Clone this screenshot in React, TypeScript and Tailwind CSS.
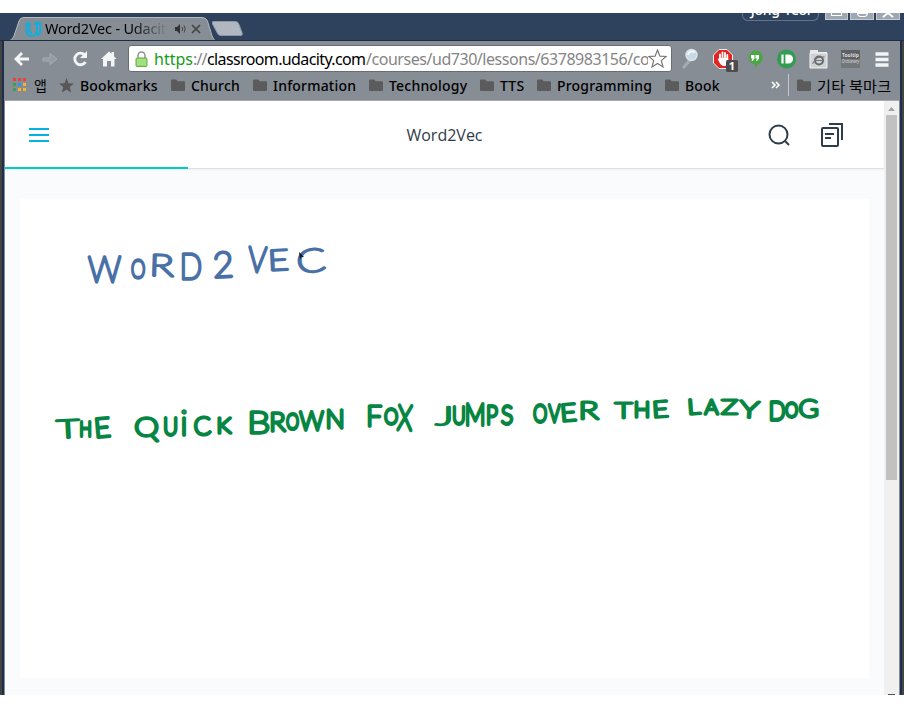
import type { ReactNode } from "react";

const UI = "font-['Noto_Sans','Noto_Sans_CJK_KR',sans-serif]";

type Letter = [string, number, number, number, number, number?];

const heading: Letter[] = [
  ["W", 87, 253, 122, 283], ["O", 130, 256, 146, 279], ["R", 152, 252, 175, 277, 2], ["D", 181, 251, 202, 280],
  ["2", 213, 249, 233, 278, -3], ["V", 247, 244, 268, 273, 3], ["E", 270, 247, 289, 271, -3], ["C", 297, 246, 326, 273, -5],
];

const sentence: Letter[] = [
  ["T", 55, 417, 81, 439, -3], ["H", 79, 418, 92, 437], ["E", 95, 415, 111, 438, -5],
  ["Q", 134, 414, 160, 441], ["U", 163, 415, 178, 436], ["i", 181, 408, 187, 436], ["C", 193, 414, 212, 436, -3], ["K", 217, 414, 233, 434],
  ["B", 249, 408, 270, 434], ["R", 270, 409, 287, 432], ["O", 285, 410, 300, 430], ["W", 298, 408, 325, 431], ["N", 326, 406, 344, 429],
  ["F", 367, 403, 383, 427], ["O", 383, 405, 399, 425], ["X", 396, 402, 414, 431, 3],
  ["J", 434, 403, 451, 426], ["U", 452, 404, 466, 425], ["M", 465, 401, 485, 426], ["P", 486, 403, 499, 425], ["S", 500, 402, 514, 425],
  ["O", 532, 402, 548, 423], ["V", 547, 402, 562, 423], ["E", 561, 401, 577, 422, -5], ["R", 580, 399, 600, 420],
  ["T", 613, 399, 634, 419], ["H", 634, 398, 650, 418], ["E", 653, 398, 669, 418, -4],
  ["L", 688, 396, 702, 415, -4], ["A", 703, 396, 720, 415], ["Z", 720, 397, 739, 415], ["Y", 738, 398, 761, 419, 4],
  ["D", 769, 399, 786, 421], ["O", 784, 400, 799, 418], ["G", 798, 397, 819, 418],
];

const pen = document.createElement("canvas").getContext("2d")!;

// Fits each written letter to its own box so the line keeps an uneven, inked rhythm.
function Ink({ letters, color, width }: { letters: Letter[]; color: string; width: number }) {
  pen.font = "100 100px Lato";
  return (
    <g fill={color} stroke={color} strokeLinejoin="round" strokeLinecap="round">
      {letters.map(([ch, x0, y0, x1, y1, turn = 0], i) => {
        const m = pen.measureText(ch);
        const inkWidth = m.actualBoundingBoxRight + m.actualBoundingBoxLeft;
        const sy = (y1 - y0 - width) / (m.actualBoundingBoxAscent + m.actualBoundingBoxDescent);
        const sx = ch === "i" ? sy : (x1 - x0 - width) / inkWidth;
        const tx = (x0 + x1) / 2 - (inkWidth * sx) / 2 + m.actualBoundingBoxLeft * sx;
        const ty = y0 + width / 2 + m.actualBoundingBoxAscent * sy;
        return (
          <text
            key={i}
            fontFamily="Lato, sans-serif"
            fontWeight={100}
            fontSize={100}
            strokeWidth={width - 0.8}
            vectorEffect="non-scaling-stroke"
            transform={`rotate(${turn} ${(x0 + x1) / 2} ${(y0 + y1) / 2}) translate(${tx} ${ty}) scale(${sx} ${sy})`}
          >
            {ch}
          </text>
        );
      })}
    </g>
  );
}

function Folder() {
  return (
    <svg width="14" height="12" viewBox="0 0 14 12" className="shrink-0">
      <path d="M0 1.500Q0 .5 1 .5h4.200l1.500 1.700H13q1 0 1 1V11q0 1-1 1H1q-1 0-1-1z" fill="#5b5b5b" />
    </svg>
  );
}

function Bookmark({ width, children }: { width: string; children: ReactNode }) {
  return (
    <div className={`flex shrink-0 items-center gap-1.5 ${width}`}>
      <Folder />
      <span>{children}</span>
    </div>
  );
}

function TitleBar() {
  return (
    <div className="flex h-7 shrink-0 overflow-hidden border-b border-[#1f2c42] bg-[#2f425d] pl-2">
      <div className="relative mt-1 h-6 w-[204px] shrink-0">
        <svg width="208" height="25" className="absolute left-0 top-0">
          <path d="M0 24Q4 24 6 19L11 4Q12 .5 16 .5H194Q198 .5 199.500 4L204 19Q206 24 208 24V25H0Z" fill="#868d95" />
          <path d="M0 24Q4 24 6 19L11 4Q12 .5 16 .5H194Q198 .5 199.500 4L204 19Q206 24 208 24" fill="none" stroke="#b3b9bf" />
        </svg>
        <div className="relative flex h-6 items-center pl-[17px]">
          <svg width="17" height="17" viewBox="0 0 17 17" fill="none" stroke="#0cb0df" strokeWidth="2">
            <path d="M4.500 1.500 1.500 3v6.500q0 5.500 5 5.500 4.500 0 5-4.500M4.500 1.500V9q0 3 2.500 3" />
            <path d="M9 3.500 12 1.500l3.500 1.500V9q0 4-3.500 5.500M12 1.500V10q-.3 2.500-2 3.500" />
          </svg>
          <span className="ml-[3px] w-[123px] overflow-hidden whitespace-nowrap bg-linear-to-r from-black from-70% to-transparent bg-clip-text text-[14.5px] tracking-[-0.2px] text-transparent">Word2Vec - Udacity</span>
          <svg width="28" height="12" viewBox="0 0 28 12" className="ml-[7px] shrink-0">
            <path d="M0 4h2l3-3v10L2 8H0z" fill="#333" />
            <path d="M7 4q1.500 2 0 4M9 2.500q2.500 3.500 0 7" stroke="#444" fill="none" />
            <path d="m17 2 8 8m0-8-8 8" stroke="#444" strokeWidth="1.700" />
          </svg>
        </div>
      </div>
      <svg width="32" height="16" className="mt-2 shrink-0">
        <path d="M1.500.5h22q2.500 0 3.500 3l3 8q1 3-1 3H9q-3 0-4-3L0 2Q-.5.5 1.500.5Z" fill="#b0b7c0" stroke="#8c96a4" />
      </svg>
      <div className="ml-auto flex">
        <div className="mr-[6px] h-2 w-[77px] overflow-hidden rounded-b-md border border-t-0 border-[#65748b] text-center">
          <div className="-mt-[13px] text-[14px] font-medium leading-5 tracking-[-0.3px] text-white">Jong-Yeol</div>
        </div>
        <div className="mr-[2px] h-[7px] w-[23px] border border-t-0 border-[#c4cbd2] bg-[#9da7b1]"><div className="mx-auto h-[3px] w-[11px] border border-t-0 border-white" /></div>
        <div className="mr-[2px] h-[7px] w-[24px] border border-t-0 border-[#c4cbd2] bg-[#9da7b1]"><div className="mx-auto h-[4px] w-[11px] rounded-b-sm border border-white" /></div>
        <div className="mr-[4px] h-[7px] w-[24px] border border-t-0 border-[#c4cbd2] bg-[#9da7b1]">
          <svg width="22" height="6"><path d="m6 4 5-4 5 4" stroke="white" strokeWidth="2" fill="none" /></svg>
        </div>
      </div>
    </div>
  );
}

function Navigation() {
  return (
    <div className="flex h-[35px] shrink-0 items-center pl-[9px]">
      <svg width="106" height="20" viewBox="0 0 106 20" className="mr-[8px] shrink-0" fill="none">
        <path d="M15 10H2M8 4l-6 6 6 6" stroke="#f3f5f6" strokeWidth="2.800" />
        <path d="M29 9h7V4.500l7 5.500-7 5.500V12h-7z" fill="#959ca3" stroke="#a6adb3" />
        <path d="M71 6.200A5.800 5.800 0 1 0 71.500 13" stroke="#f3f5f6" strokeWidth="2.800" />
        <path d="M73 2v7h-7z" fill="#f3f5f6" />
        <path d="m87 10 8-7.500 2.500 2.300V3h2.500v4.300l2.500 2.700h-2v7.500h-3.500V12h-4v5.500h-4V10z" fill="#f3f5f6" />
      </svg>
      <div className="flex h-[27px] w-[544px] shrink-0 items-center overflow-hidden rounded-[3px] border border-[#666d74] bg-white pl-1.5">
        <svg width="13" height="16" viewBox="0 0 13 16">
          <path d="M3 8V4.500a3.500 3.500 0 0 1 7 0V8" fill="none" stroke="#8d9589" strokeWidth="1.500" />
          <rect x="1" y="7" width="11" height="8.500" rx="1" fill="#96db6d" stroke="#68a94c" />
          <path d="M2 9h9M2 11h9M2 13h9" stroke="#bceba1" strokeWidth=".7" />
        </svg>
        <div className="ml-[6px] flex w-[494px] shrink-0 overflow-hidden whitespace-nowrap text-[16px] tracking-[-0.5px] text-[#858585]">
          <span className="w-[39px] shrink-0 tracking-[0px] text-[#159c16]">https</span>
          <span className="w-[14px] shrink-0 tracking-[-0.9px]">://</span>
          <span className="w-[159px] shrink-0 tracking-[-0.62px] text-black">classroom.udacity.com</span>
          <span className="tracking-[-0.46px]">/courses/ud730/lessons/6378983156/co</span>
        </div>
        <svg width="19" height="20" viewBox="0 0 19 20" className="shrink-0">
          <path d="m9.500 1 2.400 6.100 6.300.4-4.900 4.100 1.700 6.300-5.500-3.500L4 17.900l1.700-6.300L.8 7.500l6.300-.4z" fill="white" stroke="#777" strokeWidth="1.200" />
        </svg>
      </div>
      <svg width="218" height="28" viewBox="0 0 218 28" className="ml-[9px] shrink-0">
        <path d="m3 22 6-7" stroke="#a9acad" strokeWidth="3" strokeLinecap="round" />
        <circle cx="10.500" cy="10" r="5.500" fill="#c5dbe9" stroke="#dce2e5" strokeWidth="1.500" />
        <path d="M7 10q1-5 7-3" fill="none" stroke="#eff9ff" strokeWidth="2" />
        <path d="M38 4.500h8l5.500 5.500v8l-5.500 5.500h-8L32.500 18v-8z" fill="#df2424" stroke="#eee" />
        <path d="M39 14V9.500M41.500 14V7.500M44 14V8M46.300 15v-5" stroke="white" strokeWidth="1.800" strokeLinecap="round" />
        <path d="M38.100 13h9.100v4q-.5 4-4 4-3 0-4.500-3l-2-4q1-1.500 2.500 1z" fill="white" />
        <rect x="45" y="15" width="12" height="12" rx="1.500" fill="#4c4c4c" />
        <text x="51" y="25" textAnchor="middle" fontSize="11" fontWeight="700" fill="white">1</text>
        <path d="M74 19.500a7 7 0 1 1 3.500-.5q-1.500 2.500-3.500 3.500z" fill="#49a642" />
        <path d="M70 10h3.500v3.500l-2 2.500h-1l1-2.500H70zm4.500 0H78v3.500l-2 2.500h-1l1-2.500h-1.500z" fill="white" />
        <circle cx="105.500" cy="14" r="9.500" fill="#329d52" />
        <path d="M101.500 9.500v9M105.500 10.500v7h2a3.500 3.500 0 0 0 0-7z" stroke="white" strokeWidth="2.200" fill="white" />
        <path d="M129 7V5h8v2h9v16h-17z" fill="#e6e7e7" />
        <path d="M129 8h17v15h-17z" fill="#cfd1d2" stroke="#f2f2f2" />
        <circle cx="138" cy="15.500" r="4" fill="none" stroke="#66696b" strokeWidth="2" />
        <path d="M134 15.500h8M131.500 19q3-8 12-7" fill="none" stroke="#707577" />
        <path d="M160 5h19v18h-19z" fill="#747779" /><path d="M160 5h19v9h-19z" fill="#5e6163" />
        <text x="161" y="12" fontSize="6" fontWeight="700" fill="#ddd" textLength="17" lengthAdjust="spacingAndGlyphs">Tooltip</text>
        <text x="161" y="18" fontSize="4.500" fill="#ddd" textLength="17" lengthAdjust="spacingAndGlyphs">Dictionary</text>
        <path d="M194.500 9h13m-13 5.500h13M194.500 20h13" stroke="#f3f4f5" strokeWidth="3.600" />
      </svg>
    </div>
  );
}

function BookmarkBar() {
  return (
    <div className="flex h-[25px] shrink-0 items-center whitespace-nowrap border-b border-[#aaa] pb-[6px] pl-2 text-[14px] font-medium tracking-[0.2px] text-black">
      <svg width="13" height="14" viewBox="0 0 13 14" className="mr-[8px] shrink-0">
        <path d="M0 0h3v3H0zM5 0h3v3H5zM10 0h3v3h-3z" fill="#ef4037" /><path d="M0 5h3v3H0zM0 10h3v3H0z" fill="#36a254" />
        <path d="M5 5h3v3H5z" fill="#2993ee" /><path d="M10 5h3v3h-3zM5 10h3v3H5zM10 10h3v3h-3z" fill="#f7b321" />
      </svg>
      <span className="w-[25px] shrink-0 font-['Noto_Sans_CJK_KR'] font-normal">앱</span>
      <svg width="15" height="15" viewBox="0 0 24 24" className="mr-1.5 shrink-0"><path d="m12 0 3.200 8.200 8.800.6-6.800 5.600 2.200 8.600-7.400-4.800L4.600 23l2.200-8.600L0 8.800l8.800-.6z" fill="#575757" /></svg>
      <span className="w-[91px] shrink-0">Bookmarks</span>
      <Bookmark width="w-[82px]">Church</Bookmark>
      <Bookmark width="w-[116px]">Information</Bookmark>
      <Bookmark width="w-[111px]">Technology</Bookmark>
      <Bookmark width="w-[57px]">TTS</Bookmark>
      <Bookmark width="w-[128px]">Programming</Bookmark>
      <Bookmark width="w-[101px]">Book</Bookmark>
      <svg width="22" height="12" viewBox="0 0 22 12" className="shrink-0"><path d="m6 3 3 3-3 3m4-6 3 3-3 3" fill="none" stroke="white" strokeWidth="1.600" /></svg>
      <div className="mr-2 h-[22px] w-px shrink-0 bg-[#c5c9cd]" />
      <Folder /><span className="ml-1.5 font-['Noto_Sans_CJK_KR'] text-[15.2px] font-normal leading-4">기타 북마크</span>
    </div>
  );
}

export default function App() {
  return (
    <div className={`h-[708px] w-[904px] overflow-hidden bg-white py-[13px] ${UI}`}>
      <div className="flex h-[682px] flex-col bg-[#263b56]">
        <TitleBar />
        <div className="flex min-h-0 flex-1 border-l-2 border-r-2 border-[#444]">
          <div className="w-[2px] shrink-0 bg-[#1c304b]" />
          <div className="flex min-w-0 flex-1 flex-col border-x border-[#868d95] bg-white">
            <div className="shrink-0 bg-[#868d95]"><Navigation /><BookmarkBar /></div>
            <div className="flex min-h-0 flex-1">
              <div className="flex w-[879px] shrink-0 flex-col bg-[#fafbfd]">
                <header className="relative flex h-[68px] shrink-0 items-center justify-between border-b border-[#dbe2e8] bg-white pl-6 pr-[41px] shadow-xs">
                  <svg width="20" height="16" className="shrink-0"><path d="M0 2h20M0 8h20M0 14h20" stroke="#02b3e4" strokeWidth="2" /></svg>
                  <div className="absolute inset-x-0 text-center font-['Open_Sans'] text-[16px] text-[#303b48]">Word2Vec</div>
                  <svg width="76" height="26" viewBox="0 0 76 26" fill="none" stroke="#2e3d49" strokeWidth="2">
                    <circle cx="11.500" cy="12.500" r="9" /><path d="m18 19 4 4" />
                    <rect x="55" y="6" width="16" height="18" rx="1" /><path d="M62 2h13v16M58 12h9m-9 4h6" />
                  </svg>
                  <div className="absolute -bottom-px left-0 h-0.5 w-[183px] bg-[#02ccba]" />
                </header>
                <div className="mx-[15px] mt-[30px] h-[479px] shrink-0 bg-white">
                  <svg width="849" height="479" viewBox="20 198 849 479">
                    <Ink letters={heading} color="#4970a7" width={4} />
                    <Ink letters={sentence} color="#078542" width={4.4} />
                    <path d="m299 251 5 5h-3l-1 3z" fill="#151b26" />
                  </svg>
                </div>
              </div>
              <div className="flex w-[15px] shrink-0 flex-col items-center bg-[#f0f0f0]">
                <svg width="9" height="14" className="shrink-0"><path d="m1 10 3.500-4L8 10z" fill="#a3a3a3" /></svg>
                <div className="h-[365px] w-[11px] bg-[#c1c1c1]" />
                <div className="mt-auto h-px w-[7px] bg-[#505050]" />
              </div>
            </div>
          </div>
          <div className="w-[2px] shrink-0 bg-[#1c304b]" />
        </div>
      </div>
    </div>
  );
}
